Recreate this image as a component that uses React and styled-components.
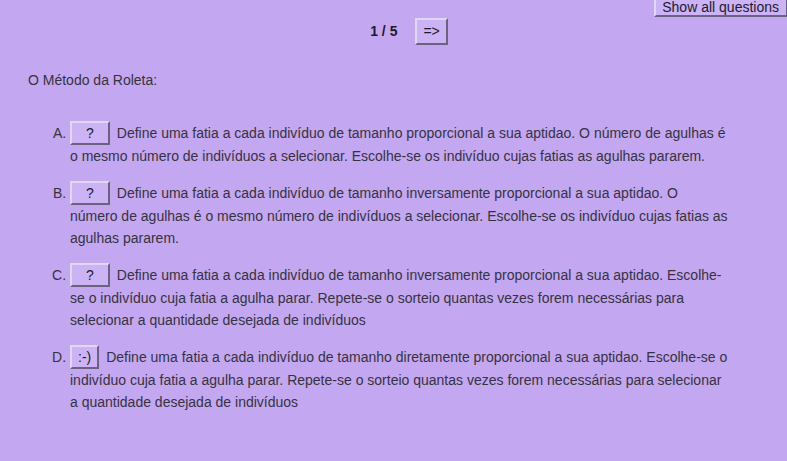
import styled, { createGlobalStyle } from "styled-components";

const answers = [
  {
    id: "A",
    hint: "?",
    wide: true,
    text: "Define uma fatia a cada indivíduo de tamanho proporcional a sua aptidao. O número de agulhas é o mesmo número de indivíduos a selecionar. Escolhe-se os indivíduo cujas fatias as agulhas pararem.",
  },
  {
    id: "B",
    hint: "?",
    wide: true,
    text: "Define uma fatia a cada indivíduo de tamanho inversamente proporcional a sua aptidao. O número de agulhas é o mesmo número de indivíduos a selecionar. Escolhe-se os indivíduo cujas fatias as agulhas pararem.",
  },
  {
    id: "C",
    hint: "?",
    wide: true,
    text: "Define uma fatia a cada indivíduo de tamanho inversamente proporcional a sua aptidao. Escolhe-se o indivíduo cuja fatia a agulha parar. Repete-se o sorteio quantas vezes forem necessárias para selecionar a quantidade desejada de indivíduos",
  },
  {
    id: "D",
    hint: ":-)",
    wide: false,
    text: "Define uma fatia a cada indivíduo de tamanho diretamente proporcional a sua aptidao. Escolhe-se o indivíduo cuja fatia a agulha parar. Repete-se o sorteio quantas vezes forem necessárias para selecionar a quantidade desejada de indivíduos",
  },
];

const GlobalStyle = createGlobalStyle`
  html, body {
    margin: 0;
    padding: 0;
    background: #c4a7f1;
  }
  body {
    font-family: "Liberation Sans", Arial, sans-serif;
    font-size: 14px;
    color: #353340;
  }
`;

const Page = styled.div`
  min-height: 461px;
  background: #c4a7f1;
`;

const TopBar = styled.div`
  display: flex;
  justify-content: flex-end;
  height: 17px;
`;

const Button = styled.button`
  font-family: "Liberation Sans", Arial, sans-serif;
  font-size: 14px;
  color: #1d1b30;
  background: #cbb3f5;
  border-style: solid;
  border-width: 2px;
  border-color: #e2d6f8 #6c6280 #6c6280 #e2d6f8;
  padding: ${(p) => (p.$wide ? "2px 14px 1px" : "2px 6px 1px")};
  line-height: 17px;
  cursor: pointer;
`;

const ShowAll = styled(Button)`
  height: 19px;
  margin-top: -2px;
  padding: 0 7px 0 6px;
  line-height: 15px;
  border-right-width: 1px;
`;

const Nav = styled.div`
  display: flex;
  justify-content: center;
  align-items: center;
  gap: 18px;
  height: 28px;
  padding-left: 31px;
`;

const Counter = styled.span`
  font-weight: bold;
  color: #1d1b2a;
`;

const NextButton = styled(Button)`
  padding: 3px 6px;
`;

const Content = styled.div`
  padding: 0 59px 0 28px;
`;

const Question = styled.p`
  margin: 24px 0 0;
  line-height: 22px;
`;

const Answers = styled.ol`
  list-style: upper-alpha;
  margin: 30px 0 0;
  padding-left: 42px;
  line-height: 22px;
`;

const Answer = styled.li`
  margin-bottom: 14px;
`;

const HintButton = styled(Button)`
  margin-right: 7px;
  vertical-align: baseline;
`;

const App = () => {
  return (
    <Page>
      <GlobalStyle />
      <TopBar>
        <ShowAll type="button">Show all questions</ShowAll>
      </TopBar>
      <Nav>
        <Counter>1 / 5</Counter>
        <NextButton type="button">=&gt;</NextButton>
      </Nav>
      <Content>
        <Question>O Método da Roleta:</Question>
        <Answers>
          {answers.map((a) => (
            <Answer key={a.id}>
              <HintButton type="button" $wide={a.wide}>
                {a.hint}
              </HintButton>
              {a.text}
            </Answer>
          ))}
        </Answers>
      </Content>
    </Page>
  );
};

export default App;
